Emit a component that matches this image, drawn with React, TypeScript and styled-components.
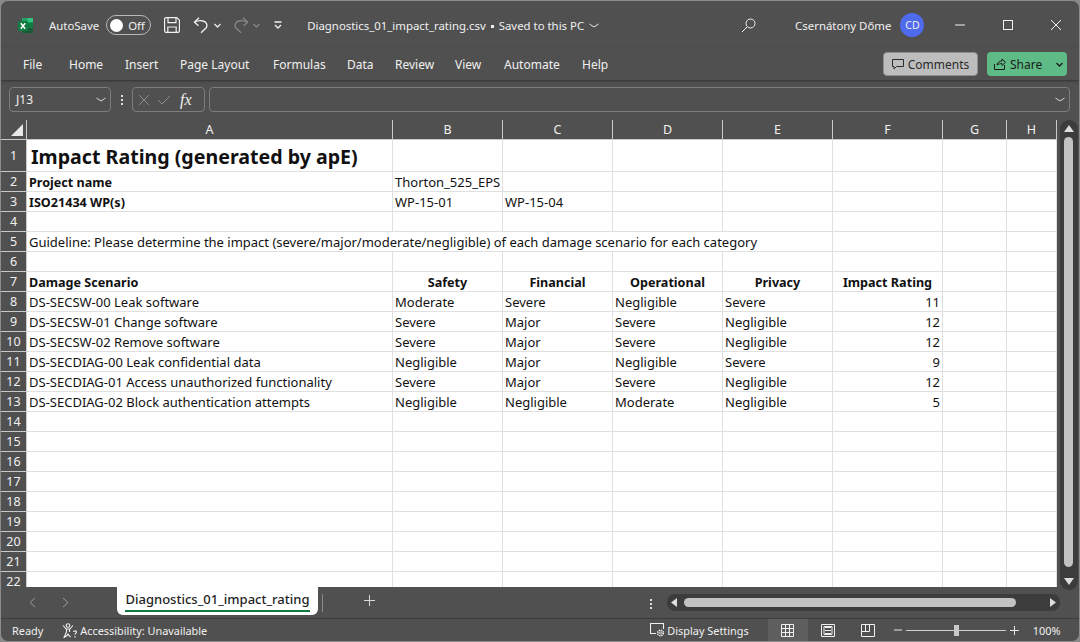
import React from 'react';
import styled, {createGlobalStyle} from 'styled-components';

const UI_FONT = `"Noto Sans", "Open Sans", sans-serif`;
const CELL_FONT = `"Noto Sans", "Liberation Sans", sans-serif`;

const GlobalStyle = createGlobalStyle`
  html, body {
    margin: 0;
    padding: 0;
    background: #8a8a8a;
    overflow: hidden;
  }
`;

const Window = styled.div`
  width: 1080px;
  height: 642px;
  box-sizing: border-box;
  display: flex;
  flex-direction: column;
  background: #505050;
  border: 1px solid #8c8c8c;
  border-radius: 8px;
  overflow: hidden;
  font-family: ${UI_FONT};
  color: #f0f0f0;
`;

const TitleBar = styled.div`
  height: 47px;
  flex: none;
  display: flex;
  align-items: center;
  padding: 1px 0 0 16px;
  box-sizing: border-box;
  font-size: 11.4px;
`;

const IconSlot = styled.span<{$left?: number; $right?: number; $dim?: boolean}>`
  display: inline-flex;
  align-items: center;
  flex: none;
  margin-left: ${({$left}) => $left ?? 0}px;
  margin-right: ${({$right}) => $right ?? 0}px;
  opacity: ${({$dim}) => ($dim ? 0.35 : 1)};
`;

const AutoSave = styled.span`
  margin-left: 15px;
`;

const Toggle = styled.span`
  margin-left: 7px;
  width: 45px;
  height: 20px;
  box-sizing: border-box;
  border: 1px solid #b8b8b8;
  border-radius: 10px;
  display: flex;
  align-items: center;
  padding-left: 3px;
  gap: 5px;
  font-size: 11.4px;
`;

const Knob = styled.span`
  width: 13px;
  height: 13px;
  border-radius: 50%;
  background: #fff;
`;

const FileName = styled.span`
  margin-left: 25px;
  white-space: nowrap;
`;

const Dot = styled.span`
  display: inline-block;
  width: 3px;
  height: 3px;
  background: #eee;
  margin: 0 5px 2px 5px;
`;

const UserName = styled.span`
  margin-left: 39px;
  white-space: nowrap;
`;

const Avatar = styled.span`
  margin-left: 9px;
  width: 24px;
  height: 24px;
  border-radius: 50%;
  background: #4f6bed;
  display: flex;
  align-items: center;
  justify-content: center;
  font-size: 10.5px;
`;

const WindowControls = styled.div`
  margin-left: 31px;
  display: flex;
  gap: 38px;
  align-items: center;
`;

const RibbonBar = styled.div`
  height: 32px;
  flex: none;
  display: flex;
  align-items: center;
  padding: 0 12px 0 22px;
  box-shadow: 0 1px 2px #333;
  position: relative;
`;

const RibbonTab = styled.span<{$width: number}>`
  width: ${({$width}) => $width}px;
  flex: none;
  font-size: 12px;
  white-space: nowrap;
`;

const RibbonActions = styled.div`
  margin-left: auto;
  display: flex;
  gap: 9px;
`;

const CommentsButton = styled.div`
  width: 95px;
  height: 24px;
  box-sizing: border-box;
  border: 1px solid #8f8f8f;
  border-radius: 4px;
  background: #bdbdbd;
  color: #2a2a2a;
  display: flex;
  align-items: center;
  justify-content: center;
  gap: 4px;
  font-size: 12px;
`;

const ShareButton = styled.div`
  width: 80px;
  height: 24px;
  box-sizing: border-box;
  border-radius: 4px;
  background: #5fbb85;
  color: #1c1c1c;
  display: flex;
  align-items: center;
  padding-left: 7px;
  gap: 4px;
  font-size: 12px;
`;

const FormulaRow = styled.div`
  height: 40px;
  flex: none;
  display: flex;
  align-items: center;
  padding: 0 9px 1px 8px;
  box-sizing: border-box;
`;

const FieldBox = styled.div`
  height: 25px;
  box-sizing: border-box;
  border: 1px solid #7c7c7c;
  border-radius: 4px;
  display: flex;
  align-items: center;
`;

const NameBox = styled(FieldBox)`
  width: 102px;
  justify-content: space-between;
  padding: 0 4px 0 6px;
  font-size: 12px;
`;

const Grip = styled.span`
  width: 21px;
  display: flex;
  flex-direction: column;
  align-items: center;
  gap: 2px;
  & > i {
    width: 2px;
    height: 2px;
    background: #ddd;
  }
`;

const FxBox = styled(FieldBox)`
  width: 73px;
  gap: 7px;
  padding-left: 5px;
`;

const FxLabel = styled.span`
  font-family: "Liberation Serif", serif;
  font-style: italic;
  font-size: 16px;
  margin-left: 2px;
`;

const FormulaInput = styled(FieldBox)`
  flex: 1;
  margin-left: 4px;
  justify-content: flex-end;
  padding-right: 4px;
`;

const SheetArea = styled.div`
  flex: 1;
  min-height: 0;
  display: flex;
`;

const Grid = styled.div`
  width: 1056px;
  flex: none;
  display: flex;
  flex-direction: column;
  overflow: hidden;
`;

const GridRow = styled.div<{$height: number}>`
  display: grid;
  grid-template-columns: 26px 366px 110px 110px 110px 110px 110px 64px 50px;
  height: ${({$height}) => $height}px;
  flex: none;
`;

const Corner = styled.div`
  border-right: 1px solid #c9c9c9;
  border-bottom: 1px solid #c9c9c9;
  display: flex;
  align-items: flex-end;
  justify-content: flex-end;
  padding: 0 3px 3px 0;
  box-sizing: border-box;
`;

const ColumnHead = styled.div`
  box-sizing: border-box;
  border-right: 1px solid #c9c9c9;
  border-bottom: 1px solid #c9c9c9;
  display: flex;
  align-items: center;
  justify-content: center;
  font-family: ${CELL_FONT};
  font-size: 12.5px;
`;

const RowHead = styled.div`
  box-sizing: border-box;
  border-right: 1px solid #c9c9c9;
  border-bottom: 1px solid #c9c9c9;
  display: flex;
  align-items: center;
  justify-content: center;
  font-family: ${CELL_FONT};
  font-size: 12.5px;
`;

const Cell = styled.div<{$span?: number; $bold?: boolean; $center?: boolean; $right?: boolean; $title?: boolean}>`
  grid-column: span ${({$span}) => $span ?? 1};
  box-sizing: border-box;
  background: #fff;
  color: #111;
  border-right: 1px solid #e0e0e0;
  border-bottom: 1px solid #e0e0e0;
  padding: 1px 2px 0;
  display: flex;
  align-items: center;
  justify-content: ${({$center, $right}) => ($center ? 'center' : $right ? 'flex-end' : 'flex-start')};
  font-family: ${CELL_FONT};
  font-size: ${({$title, $bold}) => ($title ? 19.6 : $bold ? 12.6 : 13)}px;
  font-weight: ${({$bold}) => ($bold ? 700 : 400)};
  white-space: nowrap;
`;

const TitleText = styled.span`
  margin-left: 2px;
`;

const VScroll = styled.div`
  flex: 1;
  display: flex;
  justify-content: center;
  padding-left: 1px;
`;

const VTrack = styled.div`
  width: 18px;
  height: 470px;
  border-radius: 9px;
  background: #3c3c3c;
  display: flex;
  flex: none;
  flex-direction: column;
  align-items: center;
  justify-content: space-between;
  padding: 5px 0;
  box-sizing: border-box;
`;

const VThumb = styled.div`
  width: 9px;
  flex: 1;
  margin: 5px 0 11px;
  border-radius: 5px;
  background: #c2c2c2;
`;

const SheetBar = styled.div`
  height: 32px;
  flex: none;
  display: flex;
  align-items: flex-start;
  border-bottom: 1px solid #3c3c3c;
  box-sizing: border-box;
`;

const SheetNav = styled.div`
  width: 116px;
  flex: none;
  display: flex;
  padding: 10px 0 0 28px;
  gap: 26px;
  box-sizing: border-box;
`;

const SheetTab = styled.div`
  width: 201px;
  height: 28px;
  flex: none;
  box-sizing: border-box;
  background: #fff;
  border-radius: 0 0 6px 6px;
  color: #1f1f1f;
  font-size: 13px;
  font-weight: 500;
  padding: 2px 8px 0;
  white-space: nowrap;
`;

const TabName = styled.div`
  border-bottom: 2px solid #107c41;
  line-height: 20px;
  height: 21px;
  text-align: center;
`;

const TabDivider = styled.span`
  width: 1px;
  height: 18px;
  margin: 7px 0 0 4px;
  background: #8a8a8a;
`;

const AddSheet = styled.span`
  margin: 8px 0 0 41px;
  display: flex;
`;

const SheetGrip = styled(Grip)`
  width: auto;
  margin: 12px 0 0 275px;
`;

const HTrack = styled.div`
  margin: 7px 0 0 15px;
  width: 393px;
  height: 17px;
  border-radius: 8px;
  background: #3c3c3c;
  display: flex;
  align-items: center;
  padding: 0 4px;
  box-sizing: border-box;
`;

const HThumb = styled.div`
  width: 332px;
  height: 9px;
  margin: 0 auto 0 7px;
  border-radius: 5px;
  background: #c2c2c2;
`;

const StatusBar = styled.div`
  height: 22px;
  flex: none;
  display: flex;
  align-items: center;
  font-size: 10.9px;
  padding-left: 11px;
`;

const StatusText = styled.span`
  white-space: nowrap;
`;

const StatusItem = styled.span<{$left: number}>`
  margin-left: ${({$left}) => $left}px;
  display: flex;
  align-items: center;
  gap: 2px;
  white-space: nowrap;
`;

const ViewButton = styled.span<{$active?: boolean; $left?: number}>`
  width: 40px;
  height: 22px;
  flex: none;
  margin-left: ${({$left}) => $left ?? 0}px;
  display: flex;
  align-items: center;
  justify-content: center;
  background: ${({$active}) => ($active ? '#5e5e5e' : 'transparent')};
`;

const ZoomSlider = styled.span`
  width: 100px;
  height: 1px;
  background: #cfcfcf;
  margin: 0 4px;
  position: relative;
`;

const ZoomThumb = styled.span`
  position: absolute;
  left: 48px;
  top: -5px;
  width: 5px;
  height: 11px;
  background: #c8c8c8;
`;

const ZoomLevel = styled.span`
  margin-left: 14px;
`;

const COLUMNS = ['A', 'B', 'C', 'D', 'E', 'F', 'G', 'H'];

const DAMAGE_ROWS: [string, string, string, string, string, number][] = [
  ['DS-SECSW-00 Leak software', 'Moderate', 'Severe', 'Negligible', 'Severe', 11],
  ['DS-SECSW-01 Change software', 'Severe', 'Major', 'Severe', 'Negligible', 12],
  ['DS-SECSW-02 Remove software', 'Severe', 'Major', 'Severe', 'Negligible', 12],
  ['DS-SECDIAG-00 Leak confidential data', 'Negligible', 'Major', 'Negligible', 'Severe', 9],
  ['DS-SECDIAG-01 Access unauthorized functionality', 'Severe', 'Major', 'Severe', 'Negligible', 12],
  ['DS-SECDIAG-02 Block authentication attempts', 'Negligible', 'Negligible', 'Moderate', 'Negligible', 5],
];

const Glyph: React.FC<{w: number; h?: number; color?: string; sw?: number; children: React.ReactNode}> = ({
  w,
  h,
  color = '#f0f0f0',
  sw = 1,
  children,
}) => (
  <svg width={w} height={h ?? w} viewBox={`0 0 ${w} ${h ?? w}`} fill="none" stroke={color} strokeWidth={sw}>
    {children}
  </svg>
);

const ExcelLogo = () => (
  <svg width="17" height="17" viewBox="0 0 17 17">
    <path d="M5 1h11v15H5z" fill="#21a366" />
    <path d="M5 1h5.500v4.500H5z" fill="#21a366" />
    <path d="M10.500 1h4.700c.5 0 .8.300.8.800v3.700h-5.500z" fill="#33c481" />
    <path d="M10.500 5.500H16V10h-5.500z" fill="#107c41" />
    <path d="M5 10.500h11v4.700c0 .5-.3.800-.8.800H5.800c-.5 0-.8-.3-.8-.8z" fill="#185c37" />
    <rect x="1" y="4" width="10" height="10" rx="1" fill="#107c41" />
    <path d="M3.800 6.300 8.200 11.700M8.200 6.300 3.800 11.700" stroke="#fff" strokeWidth="1.500" />
  </svg>
);

const Chevron: React.FC<{w?: number; color?: string; sw?: number}> = ({w = 7, color = '#e8e8e8', sw = 1}) => (
  <Glyph w={w} h={5} color={color} sw={sw}>
    <path d={`M.5 1 ${w / 2} 4 ${w - 0.5} 1`} />
  </Glyph>
);

const blankRow = (num: number) => (
  <GridRow key={num} $height={20}>
    <RowHead>{num}</RowHead>
    {COLUMNS.map(c => (
      <Cell key={c} />
    ))}
  </GridRow>
);

const App: React.FC = () => (
  <Window>
    <GlobalStyle />
    <TitleBar>
      <IconSlot>
        <ExcelLogo />
      </IconSlot>
      <AutoSave>AutoSave</AutoSave>
      <Toggle>
        <Knob />
        Off
      </Toggle>
      <IconSlot $left={13}>
        <Glyph w={16} sw={1.2}>
          <path d="M2 .6h10.800l2.600 2.600V14a1.400 1.400 0 0 1-1.400 1.400H2A1.400 1.400 0 0 1 .6 14V2A1.400 1.400 0 0 1 2 .6z" />
          <path d="M4 .6v5h8v-5M3.800 15.400V10h8.400v5.400" />
        </Glyph>
      </IconSlot>
      <IconSlot $left={13}>
        <Glyph w={16} sw={1.3}>
          <path d="M6 .8 1.500 5.200l4 3.500" />
          <path d="M1.500 5.200c3-1.500 6-1.800 8.500-1.200 3.500.8 5 4.200 3 7l-5 4.800" />
        </Glyph>
      </IconSlot>
      <IconSlot $left={5}>
        <Chevron sw={1.3} />
      </IconSlot>
      <IconSlot $left={12} $dim>
        <Glyph w={16} sw={1.3}>
          <path d="M10 .8l4.500 4.400-4 3.500" />
          <path d="M14.500 5.200c-3-1.500-6-1.800-8.500-1.200-3.500.8-5 4.200-3 7l5 4.800" />
        </Glyph>
      </IconSlot>
      <IconSlot $left={4} $dim>
        <Chevron sw={1.3} />
      </IconSlot>
      <IconSlot $left={14}>
        <Glyph w={8} h={8} color="#f0f0f0" sw={1.4}>
          <path d="M.5 1h7M1 4l3 3 3-3" />
        </Glyph>
      </IconSlot>
      <FileName>
        Diagnostics_01_impact_rating.csv
        <Dot />
        Saved to this PC
      </FileName>
      <IconSlot $left={5}>
        <Chevron w={10} />
      </IconSlot>
      <IconSlot $left={142}>
        <Glyph w={15}>
          <circle cx="9.500" cy="5.500" r="4.500" />
          <path d="M6 9 1 14" />
        </Glyph>
      </IconSlot>
      <UserName>Csernátony Dőme</UserName>
      <Avatar>CD</Avatar>
      <WindowControls>
        <Glyph w={10}>
          <path d="M0 5h10" />
        </Glyph>
        <Glyph w={10}>
          <rect x=".5" y=".5" width="9" height="9" />
        </Glyph>
        <Glyph w={10}>
          <path d="m0 0 10 10M10 0 0 10" />
        </Glyph>
      </WindowControls>
    </TitleBar>

    <RibbonBar>
      <RibbonTab $width={46}>File</RibbonTab>
      <RibbonTab $width={56}>Home</RibbonTab>
      <RibbonTab $width={55}>Insert</RibbonTab>
      <RibbonTab $width={93}>Page Layout</RibbonTab>
      <RibbonTab $width={74}>Formulas</RibbonTab>
      <RibbonTab $width={48}>Data</RibbonTab>
      <RibbonTab $width={60}>Review</RibbonTab>
      <RibbonTab $width={49}>View</RibbonTab>
      <RibbonTab $width={78}>Automate</RibbonTab>
      <RibbonTab $width={30}>Help</RibbonTab>
      <RibbonActions>
        <CommentsButton>
          <Glyph w={12} color="#2a2a2a">
            <path d="M.5 1.500h11v7H4.500L2 11V8.500H.5z" />
          </Glyph>
          Comments
        </CommentsButton>
        <ShareButton>
          <Glyph w={12} color="#1c1c1c">
            <path d="M.5 6v5.500h10V7M3 7c.5-3 3-4 5-4V1l3.500 3.200L8 7.500V5.500C6 5.500 4.500 6 3 7z" />
          </Glyph>
          Share
          <IconSlot $left={10}>
            <Chevron color="#1c1c1c" sw={1.3} />
          </IconSlot>
        </ShareButton>
      </RibbonActions>
    </RibbonBar>

    <FormulaRow>
      <NameBox>
        J13
        <Chevron w={10} color="#d8d8d8" />
      </NameBox>
      <Grip>
        <i />
        <i />
        <i />
      </Grip>
      <FxBox>
        <Glyph w={12} color="#8c8c8c">
          <path d="m1 1 10 10M11 1 1 11" />
        </Glyph>
        <Glyph w={14} h={12} color="#8c8c8c">
          <path d="m1 6 4 4 8-8" />
        </Glyph>
        <FxLabel>fx</FxLabel>
      </FxBox>
      <FormulaInput>
        <Chevron w={10} color="#d8d8d8" />
      </FormulaInput>
    </FormulaRow>

    <SheetArea>
      <Grid>
        <GridRow $height={20}>
          <Corner>
            <svg width="12" height="12" viewBox="0 0 12 12">
              <path d="M12 0v12H0z" fill="#e8e8e8" />
            </svg>
          </Corner>
          {COLUMNS.map(c => (
            <ColumnHead key={c}>{c}</ColumnHead>
          ))}
        </GridRow>

        <GridRow $height={32}>
          <RowHead>1</RowHead>
          <Cell $title $bold>
            <TitleText>Impact Rating (generated by apE)</TitleText>
          </Cell>
          {COLUMNS.slice(1).map(c => (
            <Cell key={c} />
          ))}
        </GridRow>

        <GridRow $height={20}>
          <RowHead>2</RowHead>
          <Cell $bold>Project name</Cell>
          <Cell>Thorton_525_EPS</Cell>
          {COLUMNS.slice(2).map(c => (
            <Cell key={c} />
          ))}
        </GridRow>

        <GridRow $height={20}>
          <RowHead>3</RowHead>
          <Cell $bold>ISO21434 WP(s)</Cell>
          <Cell>WP-15-01</Cell>
          <Cell>WP-15-04</Cell>
          {COLUMNS.slice(3).map(c => (
            <Cell key={c} />
          ))}
        </GridRow>

        {blankRow(4)}

        <GridRow $height={20}>
          <RowHead>5</RowHead>
          <Cell $span={5}>
            Guideline: Please determine the impact (severe/major/moderate/negligible) of each damage scenario for each category
          </Cell>
          {COLUMNS.slice(5).map(c => (
            <Cell key={c} />
          ))}
        </GridRow>

        {blankRow(6)}

        <GridRow $height={20}>
          <RowHead>7</RowHead>
          <Cell $bold>Damage Scenario</Cell>
          <Cell $bold $center>Safety</Cell>
          <Cell $bold $center>Financial</Cell>
          <Cell $bold $center>Operational</Cell>
          <Cell $bold $center>Privacy</Cell>
          <Cell $bold $center>Impact Rating</Cell>
          <Cell />
          <Cell />
        </GridRow>

        {DAMAGE_ROWS.map((row, i) => (
          <GridRow key={row[0]} $height={20}>
            <RowHead>{i + 8}</RowHead>
            <Cell>{row[0]}</Cell>
            <Cell>{row[1]}</Cell>
            <Cell>{row[2]}</Cell>
            <Cell>{row[3]}</Cell>
            <Cell>{row[4]}</Cell>
            <Cell $right>{row[5]}</Cell>
            <Cell />
            <Cell />
          </GridRow>
        ))}

        {[14, 15, 16, 17, 18, 19, 20, 21, 22].map(blankRow)}
      </Grid>
      <VScroll>
        <VTrack>
          <svg width="10" height="7" viewBox="0 0 10 7">
            <path d="M5 0 10 7H0z" fill="#ddd" />
          </svg>
          <VThumb />
          <svg width="10" height="7" viewBox="0 0 10 7">
            <path d="M5 7 10 0H0z" fill="#ddd" />
          </svg>
        </VTrack>
      </VScroll>
    </SheetArea>

    <SheetBar>
      <SheetNav>
        <Glyph w={7} h={11} color="#9a9a9a">
          <path d="M6 1 1 5.500 6 10" />
        </Glyph>
        <Glyph w={7} h={11} color="#9a9a9a">
          <path d="m1 1 5 4.500L1 10" />
        </Glyph>
      </SheetNav>
      <SheetTab>
        <TabName>Diagnostics_01_impact_rating</TabName>
      </SheetTab>
      <TabDivider />
      <AddSheet>
        <Glyph w={11} color="#d8d8d8">
          <path d="M5.500 0v11M0 5.500h11" />
        </Glyph>
      </AddSheet>
      <SheetGrip>
        <i />
        <i />
        <i />
      </SheetGrip>
      <HTrack>
        <svg width="6" height="9" viewBox="0 0 6 9">
          <path d="M0 4.500 6 0v9z" fill="#ddd" />
        </svg>
        <HThumb />
        <svg width="6" height="9" viewBox="0 0 6 9">
          <path d="M6 4.500 0 0v9z" fill="#ddd" />
        </svg>
      </HTrack>
    </SheetBar>

    <StatusBar>
      <StatusText>Ready</StatusText>
      <StatusItem $left={19}>
        <Glyph w={16} h={15} color="#f0f0f0" sw={1.1}>
          <circle cx="6" cy="2.500" r="1.800" />
          <path d="M1 2.500 4.200 6h3.600L11 2.500M4.500 6v3l-2.500 5.500 3-2 1-1.500 1 1.500 1.500 1.500M7.500 6v3" />
          <path d="M11.500 9c.3-1.500 3-1.500 3 0 0 1.200-1.500 1.200-1.500 2.800M13 13v1.500" />
        </Glyph>
        Accessibility: Unavailable
      </StatusItem>
      <StatusItem $left={443}>
        <Glyph w={15} h={14} color="#f0f0f0" sw={1.1}>
          <path d="M6 10.500H.5V.5h13V6" />
          <circle cx="10.500" cy="10" r="2.800" strokeWidth="1.600" strokeDasharray="1.400 .8" />
          <circle cx="10.500" cy="10" r="1" strokeWidth=".8" />
        </Glyph>
        Display Settings
      </StatusItem>
      <ViewButton $active $left={19}>
        <Glyph w={13} color="#f0f0f0">
          <path d="M.5.500h12v12H.5zM.5 4.500h12M.5 8.500h12M4.500.5v12M8.500.5v12" />
        </Glyph>
      </ViewButton>
      <ViewButton>
        <Glyph w={14} h={13} color="#f0f0f0">
          <path d="M.5.500h13v12H.5zM4 3.500h6M4 6.500h6M4 9.500h6M3 2.500v8h8v-8z" />
        </Glyph>
      </ViewButton>
      <ViewButton>
        <Glyph w={14} h={13} color="#f0f0f0">
          <path d="M.5.500h13v12H.5zM.5 7.500h8V.5M4.500.5v7" />
        </Glyph>
      </ViewButton>
      <IconSlot $left={6}>
        <Glyph w={8} h={8} color="#e8e8e8">
          <path d="M0 4h8" />
        </Glyph>
      </IconSlot>
      <ZoomSlider>
        <ZoomThumb />
      </ZoomSlider>
      <Glyph w={9} color="#e8e8e8">
        <path d="M4.500 0v9M0 4.500h9" />
      </Glyph>
      <ZoomLevel>100%</ZoomLevel>
    </StatusBar>
  </Window>
);

export default App;
